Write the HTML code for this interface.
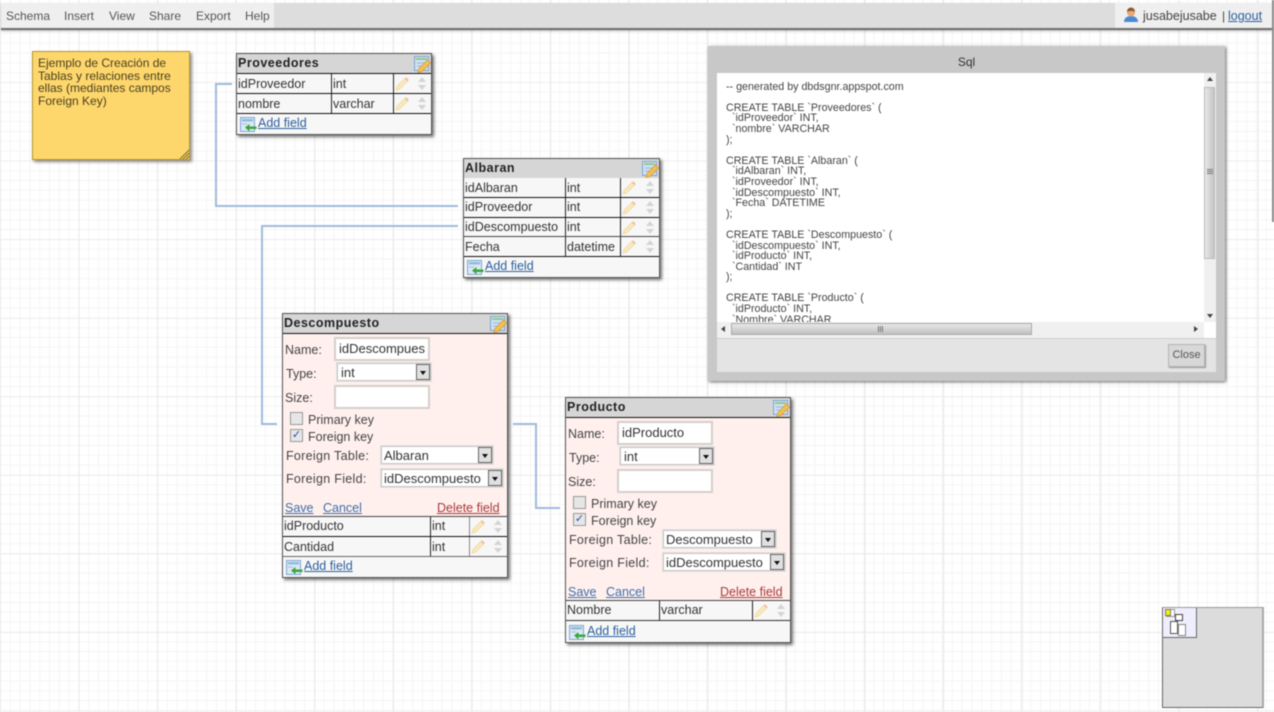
<!DOCTYPE html>
<html><head><meta charset="utf-8"><title>dbdsgnr</title>
<style>
html,body{margin:0;padding:0;width:1274px;height:712px;overflow:hidden;background:#fff;font-family:"Liberation Sans",Arial,sans-serif;color:#333}
#wrap{position:absolute;left:0;top:0;width:1274px;height:712px;overflow:hidden;filter:blur(.4px);
background-color:#fff;
background-image:linear-gradient(to right,#e8e8e8 1px,transparent 1px),linear-gradient(to bottom,#eeeeee 1px,transparent 1px),linear-gradient(to right,#f4f4f4 1px,transparent 1px),linear-gradient(to bottom,#f5f5f5 1px,transparent 1px);
background-size:78.6px 78.6px,78.6px 78.6px,9.82px 9.82px,9.82px 9.82px;
background-position:0 0,0 3.4px,0 0,0 3.4px}
.a{position:absolute;white-space:nowrap}
#bar{position:absolute;left:1px;top:3px;width:1271px;height:25px;background:#dddddd;border-bottom:2px solid #707070;box-shadow:0 1px 2px rgba(0,0,0,.3)}
#menu{position:absolute;left:1px;top:3px;width:273px;height:25px;background:#efefef}
#user{position:absolute;left:1115px;top:3px;width:157px;height:25px;background:#efefef}
.m{position:absolute;top:6px;font-size:12px;line-height:14px;color:#555;white-space:nowrap}
.line{position:absolute;background:#9fbbdc}
.note{position:absolute;left:32px;top:51px;width:156px;height:107px;background:#fed76c;border:1px solid #b3962c;box-shadow:2px 2px 3px rgba(0,0,0,.45);font-size:12px;line-height:12.6px;color:#4a4020}
.t{position:absolute;background:#f7f7f7;border:1px solid #555;box-shadow:2px 2px 3px rgba(0,0,0,.55);box-sizing:border-box}
.h{position:absolute;left:0;right:0;top:0;height:19px;background:#d6d6d6;border-bottom:1px solid #111;font-weight:bold;font-size:12.5px;letter-spacing:.5px;line-height:18px;padding-left:1px;color:#222}
.r{position:absolute;left:0;right:0;height:19px;border-bottom:1px solid #111;font-size:12.5px;line-height:20px;color:#333;background:#f7f7f7}
.r span{position:absolute;top:0;bottom:0;padding-left:1px;white-space:nowrap}
.c{border-left:1px solid #222}
.pen{position:absolute;width:15px;height:15px;top:2px}
.ud{position:absolute;width:10px;height:15px;top:2px}
.ed{position:absolute;width:17px;height:17px;top:2px;right:0}
.add{position:absolute;left:0;right:0;bottom:0;height:20px;font-size:12.5px;line-height:19px;white-space:nowrap}
.add a{color:#2c5f9e;text-decoration:underline}
.add svg{position:absolute;left:3px;top:3px;width:17px;height:15px}
.add a{position:absolute;left:21px;top:0}
.f{position:absolute;left:0;right:0;top:20px;height:183px;background:#fff0ee}
.l{position:absolute;font-size:12.5px;line-height:14px;color:#444;white-space:nowrap}
.lk{color:#3f6ea8;text-decoration:underline}
.ft{letter-spacing:.3px}
.i{position:absolute;background:#fff;border:2px solid #d4d0cc;box-sizing:border-box;font-size:13px;line-height:19px;padding-left:3px;color:#333;overflow:hidden;white-space:nowrap}
.s{position:absolute;background:#fff;border:1px solid #c6c6c6;box-shadow:0 0 0 1px #e4e0de;box-sizing:border-box;font-size:13px;line-height:17px;padding-left:2px;color:#333;white-space:nowrap;overflow:hidden}
.s b{position:absolute;right:0;top:0;bottom:0;width:14px;background:#e0e0e0;border:1px solid #666;box-sizing:border-box}
.s b:after{content:"";position:absolute;left:3px;top:6px;border:3.5px solid transparent;border-top:4px solid #111;border-bottom:0}
.cb{position:absolute;width:13px;height:13px;background:#e6e6e6;border:1px solid #999;box-sizing:border-box}
#modal{position:absolute;left:708px;top:46px;width:517px;height:335px;background:#c8c8c8;box-shadow:1px 1px 3px rgba(0,0,0,.6)}
#modal .title{position:absolute;left:0;right:0;top:9px;text-align:center;font-size:12px;line-height:14px;color:#333}
#sql{position:absolute;left:9px;top:27px;width:499px;height:265px;background:#fff;overflow:hidden}
#sql pre{position:absolute;left:9px;top:8.6px;margin:0;font:10.7px/10.6px "Liberation Sans",Arial,sans-serif;color:#444;height:240px;overflow:hidden}
#vs{position:absolute;left:487px;top:0;width:12px;height:249px;background:#f0f0f0}
#vs i{position:absolute;left:0;top:14px;width:11px;height:172px;background:linear-gradient(to right,#e8e8e8,#c4c4c4);border:1px solid #bbb;box-sizing:border-box}
#hs{position:absolute;left:0;top:249px;width:487px;height:16px;background:#f0f0f0}
#hs i{position:absolute;left:14px;top:1px;width:301px;height:12px;background:linear-gradient(#e8e8e8,#c0c0c0);border:1px solid #aaa;box-sizing:border-box}
#foot{position:absolute;left:9px;top:292px;width:499px;height:34px;background:#e4e4e4;border-top:1px solid #d0d0d0;box-sizing:border-box}
#close{position:absolute;left:451px;top:5px;width:37px;height:23px;background:#d8d8d8;border:1px solid #b4b4b4;box-shadow:1px 1px 1px #999;box-sizing:border-box;font-size:11px;line-height:21px;text-align:center;color:#555}
#mini{position:absolute;left:1162px;top:607px;width:99px;height:99px;background:#dcdcdc;border:1px solid #666;border-right:2px solid #aaa;border-top:1px solid #999;box-sizing:content-box}
#view{position:absolute;left:0;top:0;width:33px;height:29px;background:#eeeeff;border-right:1px solid #666;border-bottom:1px solid #666}
.mb{position:absolute;background:#fff;border:1.5px solid #666;box-sizing:border-box}
</style></head><body>
<svg width="0" height="0" style="position:absolute"><defs>
<symbol id="pen" viewBox="0 0 15 15"><path d="M2 10.500 10.500 2l2.500 2.500L4.500 13 1 14z" fill="#f9e9c0" stroke="#f2dca8" stroke-width="1"/><path d="M10.500 2l2.500 2.500" stroke="#eec0a0" stroke-width="2"/></symbol>
<symbol id="ud" viewBox="0 0 10 15"><path d="M5 1 9 6H1z" fill="#d4d4d4"/><path d="M5 14 9 9H1z" fill="#d4d4d4"/></symbol>
<symbol id="ed" viewBox="0 0 17 17"><rect x=".5" y=".5" width="14" height="14" fill="#cfe0f3" stroke="#7ea6d2"/><rect x="2" y="2" width="11" height="2" fill="#8fc98a"/><path d="M3 7h8M3 10h5" stroke="#9fb8d6"/><path d="M5 12.500 13.500 4l3 3L8 15.500 4 16.500z" fill="#f3c14f" stroke="#d89a3a" stroke-width=".8"/></symbol>
<symbol id="addi" viewBox="0 0 17 15"><rect x=".5" y=".5" width="14" height="14" fill="#dbe8f5" stroke="#7ea6d2"/><rect x="2" y="2" width="11" height="2.500" fill="#8fbcdc"/><path d="M2 7h5" stroke="#a8bfd8"/><path d="M5 10.500 9.500 7v2.500h7v2.500h-7v2.500z" fill="#3da63d"/></symbol>
</defs></svg>
<div id="wrap">
<div id="bar"></div>
<div id="menu">
<span class="m" style="left:5px">Schema</span><span class="m" style="left:63px">Insert</span><span class="m" style="left:108px">View</span><span class="m" style="left:148px">Share</span><span class="m" style="left:195px">Export</span><span class="m" style="left:244px">Help</span>
</div>
<div id="user">
<svg class="a" style="left:8px;top:4px" width="16" height="16" viewBox="0 0 16 16"><path d="M1 15c0-4 3-6 7-6s7 2 7 6z" fill="#4a8ad4"/><circle cx="8" cy="5.500" r="4" fill="#e8a878"/><path d="M4 5c0-3 2-4.500 4-4.500S12 2 12 5C10 3.500 7 3.500 4 5z" fill="#8a5a30"/></svg>
<span class="m" style="left:28px;color:#444;font-size:12.500px">jusabejusabe</span><span class="m" style="left:107px;color:#444">|</span><span class="m" style="left:113px;color:#2c5f9e;font-size:12.500px;text-decoration:underline">logout</span>
</div>
<div class="a" style="left:1272px;top:0;width:2px;height:222px;background:#888"></div>

<!-- connectors -->
<div class="line" style="left:215px;top:83px;width:17px;height:2px"></div>
<div class="line" style="left:215px;top:83px;width:2px;height:124px"></div>
<div class="line" style="left:215px;top:205px;width:243px;height:2px"></div>
<div class="line" style="left:262px;top:225px;width:196px;height:2px"></div>
<div class="line" style="left:261px;top:225px;width:2px;height:200px"></div>
<div class="line" style="left:261px;top:423px;width:16px;height:2px"></div>
<div class="line" style="left:513px;top:423px;width:23px;height:2px"></div>
<div class="line" style="left:535px;top:423px;width:2px;height:86px"></div>
<div class="line" style="left:535px;top:507px;width:25px;height:2px"></div>

<!-- note -->
<div class="note"><div class="a" style="left:5px;top:5px">Ejemplo de Creación de<br>Tablas y relaciones entre<br>ellas (mediantes campos<br>Foreign Key)</div>
<svg class="a" style="right:0;bottom:0" width="10" height="10" viewBox="0 0 10 10"><path d="M1 10 10 1M4 10l6-6M7 10l3-3" stroke="#7d6a2a" stroke-width="1"/></svg></div>

<!-- Proveedores -->
<div class="t" style="left:236px;top:53px;width:196px;height:82px">
<div class="h">Proveedores<svg class="ed"><use href="#ed"/></svg></div>
<div class="r" style="top:20px"><span style="left:0">idProveedor</span><span class="c" style="left:94px">int</span><span class="c" style="left:156px;right:0"></span><svg class="pen" style="right:21px"><use href="#pen"/></svg><svg class="ud" style="right:4px"><use href="#ud"/></svg></div>
<div class="r" style="top:40px"><span style="left:0">nombre</span><span class="c" style="left:94px">varchar</span><span class="c" style="left:156px;right:0"></span><svg class="pen" style="right:21px"><use href="#pen"/></svg><svg class="ud" style="right:4px"><use href="#ud"/></svg></div>
<div class="add"><svg><use href="#addi"/></svg><a>Add field</a></div>
</div>

<!-- Albaran -->
<div class="t" style="left:463px;top:158px;width:197px;height:120px">
<div class="h">Albaran<svg class="ed"><use href="#ed"/></svg></div>
<div class="r" style="top:19px"><span style="left:0">idAlbaran</span><span class="c" style="left:101px">int</span><span class="c" style="left:156px;right:0"></span><svg class="pen" style="right:22px"><use href="#pen"/></svg><svg class="ud" style="right:4px"><use href="#ud"/></svg></div>
<div class="r" style="top:39px;line-height:18px"><span style="left:0">idProveedor</span><span class="c" style="left:101px">int</span><span class="c" style="left:156px;right:0"></span><svg class="pen" style="right:22px"><use href="#pen"/></svg><svg class="ud" style="right:4px"><use href="#ud"/></svg></div>
<div class="r" style="top:59px;height:18px;line-height:18px;border-bottom-color:#444"><span style="left:0">idDescompuesto</span><span class="c" style="left:101px">int</span><span class="c" style="left:156px;right:0"></span><svg class="pen" style="right:22px"><use href="#pen"/></svg><svg class="ud" style="right:4px"><use href="#ud"/></svg></div>
<div class="r" style="top:78px"><span style="left:0">Fecha</span><span class="c" style="left:101px">datetime</span><span class="c" style="left:156px;right:0"></span><svg class="pen" style="right:22px"><use href="#pen"/></svg><svg class="ud" style="right:4px"><use href="#ud"/></svg></div>
<div class="add"><svg><use href="#addi"/></svg><a>Add field</a></div>
</div>

<!-- Descompuesto -->
<div class="t" style="left:282px;top:313px;width:226px;height:265px">
<div class="h">Descompuesto<svg class="ed"><use href="#ed"/></svg></div>
<div class="f">
<span class="l" style="left:2px;top:9px">Name:</span><div class="i" style="left:51px;top:3px;width:96px;height:24px">idDescompues</div>
<span class="l" style="left:3px;top:33px">Type:</span><div class="s" style="left:54px;top:29px;width:94px;height:18px;padding-left:3px">int<b></b></div>
<span class="l" style="left:2px;top:57px">Size:</span><div class="i" style="left:51px;top:51px;width:96px;height:24px"></div>
<div class="cb" style="left:7px;top:78px"></div><span class="l" style="left:25px;top:79px">Primary key</span>
<div class="cb" style="left:7px;top:95px;color:#2c4f9e;font-size:11px;line-height:10px;text-align:center">✓</div><span class="l" style="left:25px;top:96px">Foreign key</span>
<span class="l ft" style="left:3px;top:115px">Foreign Table:</span><div class="s" style="left:98px;top:112px;width:112px;height:18px">Albaran<b></b></div>
<span class="l ft" style="left:3px;top:138px">Foreign Field:</span><div class="s" style="left:98px;top:135px;width:122px;height:18px">idDescompuesto<b></b></div>
<span class="l lk" style="left:2px;top:167px">Save</span><span class="l lk" style="left:40px;top:167px">Cancel</span><span class="l lk" style="left:154px;top:167px;color:#a83a3a">Delete field</span>
</div>
<div class="r" style="top:202px;border-top:1px solid #444;height:19px;line-height:18px"><span style="left:0">idProducto</span><span class="c" style="left:147px">int</span><span class="c" style="left:186px;right:0;border-color:#888"></span><svg class="pen" style="right:21px"><use href="#pen"/></svg><svg class="ud" style="right:4px"><use href="#ud"/></svg></div>
<div class="r" style="top:223px;height:19px;border-bottom-color:#666"><span style="left:0">Cantidad</span><span class="c" style="left:147px">int</span><span class="c" style="left:186px;right:0;border-color:#888"></span><svg class="pen" style="right:21px"><use href="#pen"/></svg><svg class="ud" style="right:4px"><use href="#ud"/></svg></div>
<div class="add"><svg><use href="#addi"/></svg><a>Add field</a></div>
</div>

<!-- Producto -->
<div class="t" style="left:565px;top:397px;width:226px;height:246px">
<div class="h">Producto<svg class="ed"><use href="#ed"/></svg></div>
<div class="f">
<span class="l" style="left:2px;top:9px">Name:</span><div class="i" style="left:51px;top:3px;width:96px;height:24px">idProducto</div>
<span class="l" style="left:3px;top:33px">Type:</span><div class="s" style="left:54px;top:29px;width:94px;height:18px;padding-left:3px">int<b></b></div>
<span class="l" style="left:2px;top:57px">Size:</span><div class="i" style="left:51px;top:51px;width:96px;height:24px"></div>
<div class="cb" style="left:7px;top:78px"></div><span class="l" style="left:25px;top:79px">Primary key</span>
<div class="cb" style="left:7px;top:95px;color:#2c4f9e;font-size:11px;line-height:10px;text-align:center">✓</div><span class="l" style="left:25px;top:96px">Foreign key</span>
<span class="l ft" style="left:3px;top:115px">Foreign Table:</span><div class="s" style="left:97px;top:112px;width:113px;height:18px">Descompuesto<b></b></div>
<span class="l ft" style="left:3px;top:138px">Foreign Field:</span><div class="s" style="left:97px;top:135px;width:122px;height:18px">idDescompuesto<b></b></div>
<span class="l lk" style="left:2px;top:167px">Save</span><span class="l lk" style="left:40px;top:167px">Cancel</span><span class="l lk" style="left:154px;top:167px;color:#a83a3a">Delete field</span>
</div>
<div class="r" style="top:202px;border-top:1px solid #444;height:19px;line-height:18px;border-bottom-color:#333"><span style="left:0">Nombre</span><span class="c" style="left:93px">varchar</span><span class="c" style="left:186px;right:0"></span><svg class="pen" style="right:21px"><use href="#pen"/></svg><svg class="ud" style="right:4px"><use href="#ud"/></svg></div>
<div class="add"><svg><use href="#addi"/></svg><a>Add field</a></div>
</div>

<!-- SQL modal -->
<div id="modal">
<div class="title">Sql</div>
<div id="sql"><pre>-- generated by dbdsgnr.appspot.com

CREATE TABLE `Proveedores` (
  `idProveedor` INT,
  `nombre` VARCHAR
);

CREATE TABLE `Albaran` (
  `idAlbaran` INT,
  `idProveedor` INT,
  `idDescompuesto` INT,
  `Fecha` DATETIME
);

CREATE TABLE `Descompuesto` (
  `idDescompuesto` INT,
  `idProducto` INT,
  `Cantidad` INT
);

CREATE TABLE `Producto` (
  `idProducto` INT,
  `Nombre` VARCHAR
);</pre>
<div id="vs"><i></i>
<svg class="a" style="left:3px;top:4px" width="6" height="4"><path d="M3 0 6 4H0z" fill="#444"/></svg>
<svg class="a" style="left:3px;top:96px" width="6" height="5"><path d="M0 .5h6M0 2.500h6M0 4.500h6" stroke="#777"/></svg>
<svg class="a" style="left:3px;top:241px" width="6" height="4"><path d="M3 4 6 0H0z" fill="#444"/></svg></div>
<div id="hs"><i></i>
<svg class="a" style="left:4px;top:4px" width="4" height="6"><path d="M0 3 4 0v6z" fill="#444"/></svg>
<svg class="a" style="left:161px;top:4px" width="6" height="6"><path d="M.5 0v6M2.500 0v6M4.500 0v6" stroke="#777"/></svg>
<svg class="a" style="left:477px;top:4px" width="4" height="6"><path d="M4 3 0 0v6z" fill="#444"/></svg></div>
</div>
<div id="foot"><div id="close">Close</div></div>
</div>

<!-- minimap -->
<div id="mini"><div id="view">
<div class="mb" style="left:3px;top:1px;width:9px;height:8px;border-color:#999"></div>
<div class="mb" style="left:12px;top:6px;width:8px;height:7px;border-color:#444"></div>
<div class="mb" style="left:7px;top:13px;width:8px;height:13px;border-color:#555"></div>
<div class="mb" style="left:15px;top:16px;width:8px;height:12px;border-color:#888"></div>
<div class="a" style="left:2px;top:1px;width:4px;height:5px;background:#f4f400;border:1px solid #777;box-sizing:content-box"></div>
</div></div>
</div>
</body></html>
